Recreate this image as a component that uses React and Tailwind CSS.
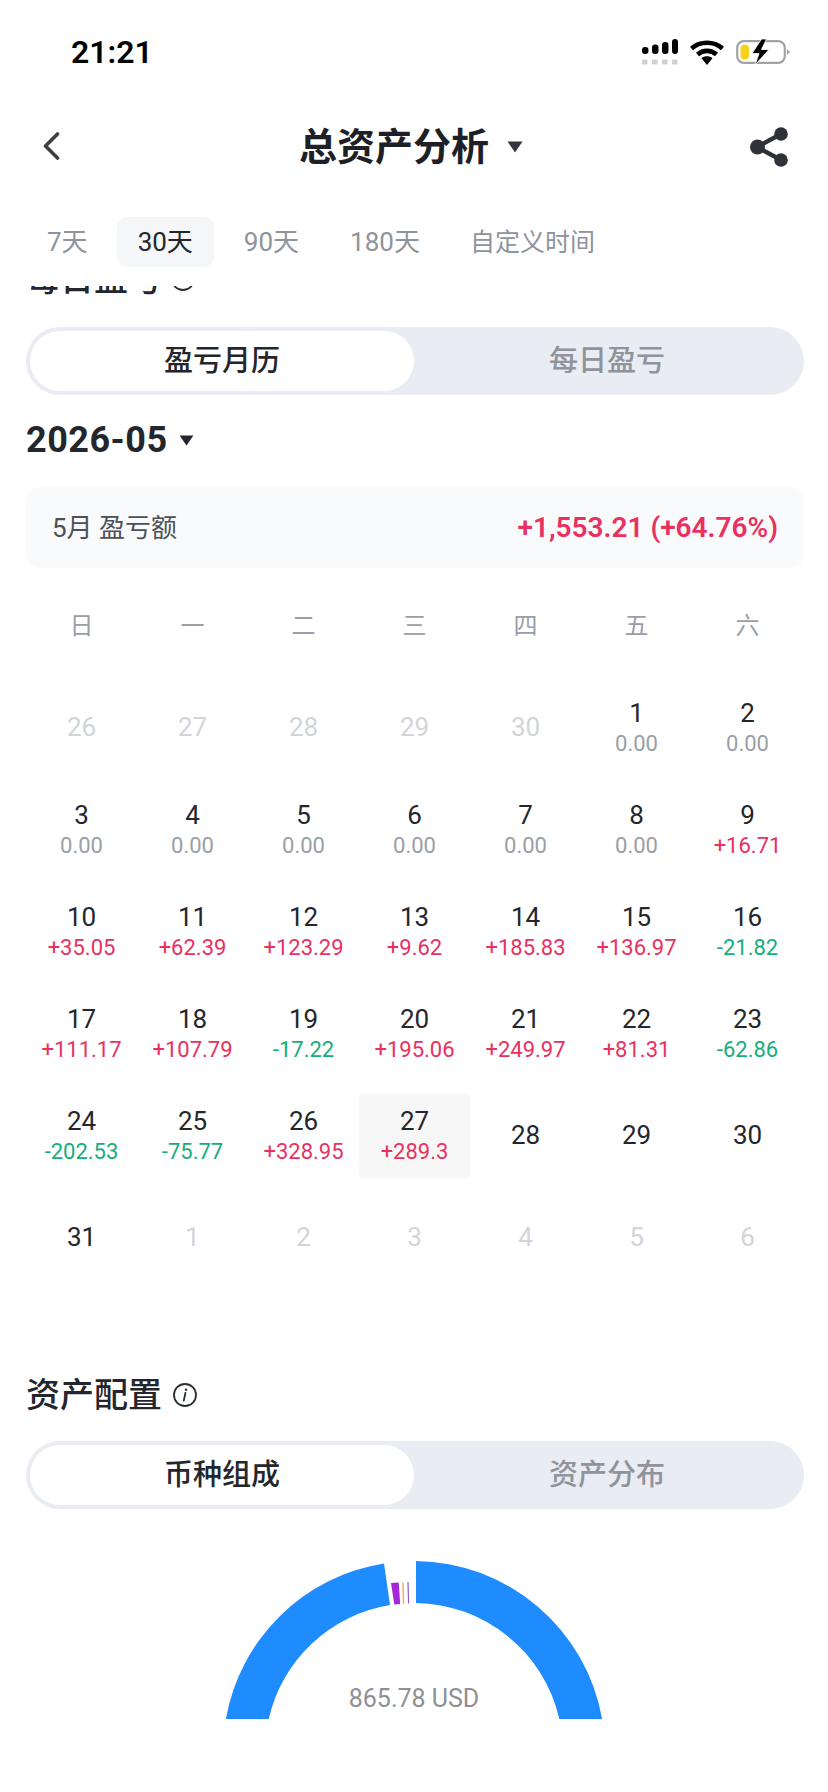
import React from 'react';

const weekDays = ['日', '一', '二', '三', '四', '五', '六'];

const days = [
  { d: '26', muted: true }, { d: '27', muted: true }, { d: '28', muted: true }, { d: '29', muted: true }, { d: '30', muted: true }, { d: '1', v: '0.00' }, { d: '2', v: '0.00' },
  { d: '3', v: '0.00' }, { d: '4', v: '0.00' }, { d: '5', v: '0.00' }, { d: '6', v: '0.00' }, { d: '7', v: '0.00' }, { d: '8', v: '0.00' }, { d: '9', v: '+16.71' },
  { d: '10', v: '+35.05' }, { d: '11', v: '+62.39' }, { d: '12', v: '+123.29' }, { d: '13', v: '+9.62' }, { d: '14', v: '+185.83' }, { d: '15', v: '+136.97' }, { d: '16', v: '-21.82' },
  { d: '17', v: '+111.17' }, { d: '18', v: '+107.79' }, { d: '19', v: '-17.22' }, { d: '20', v: '+195.06' }, { d: '21', v: '+249.97' }, { d: '22', v: '+81.31' }, { d: '23', v: '-62.86' },
  { d: '24', v: '-202.53' }, { d: '25', v: '-75.77' }, { d: '26', v: '+328.95' }, { d: '27', v: '+289.3', today: true }, { d: '28' }, { d: '29' }, { d: '30' },
  { d: '31' }, { d: '1', muted: true }, { d: '2', muted: true }, { d: '3', muted: true }, { d: '4', muted: true }, { d: '5', muted: true }, { d: '6', muted: true },
];

const valueColor = (v) => {
  if (v.startsWith('+')) return 'text-[#e8315f]';
  if (v.startsWith('-')) return 'text-[#16ad7c]';
  return 'text-[#9a9ea6]';
};

const Triangle = ({ className }) => (
  <svg viewBox="0 0 16 12" className={className}>
    <path d="M0.5 0.5H15.5L8 11.5Z" fill="currentColor" />
  </svg>
);

const InfoIcon = () => (
  <svg viewBox="0 0 26 26" className="w-[26px] h-[26px] text-[#2a2e35]">
    <circle cx="13" cy="13" r="11" fill="none" stroke="currentColor" strokeWidth="1.8" />
    <circle cx="14" cy="7.8" r="1.2" fill="currentColor" />
    <path d="M13.4 11 L11.8 18.6" fill="none" stroke="currentColor" strokeWidth="1.8" strokeLinecap="round" />
  </svg>
);

const Segment = ({ active, other }) => (
  <div className="ml-[26px] mr-[24px] h-[68px] rounded-full bg-[#e9ecf2] p-[4px] flex items-stretch text-[29px] leading-none">
    <div className="w-[384px] rounded-full bg-white flex items-center justify-center text-[#23262c] font-medium">{active}</div>
    <div className="flex-1 flex items-center justify-center text-[#8f939b] font-medium">{other}</div>
  </div>
);

const StatusIcons = () => (
  <div className="flex items-center">
    {/* signal */}
    <svg viewBox="0 0 36 26" className="w-[36px] h-[26px]">
      <rect x="0" y="8" width="6.5" height="7" rx="3" fill="#000" />
      <rect x="10" y="5.5" width="6.5" height="9.5" rx="3" fill="#000" />
      <rect x="20" y="3" width="6.5" height="12" rx="3" fill="#000" />
      <rect x="30" y="0" width="6" height="15" rx="3" fill="#000" />
      {[0, 10, 20, 30].map((x) => (
        <rect key={x} x={x} y="20.5" width="5.5" height="5" rx="1" fill="#cfcfcf" />
      ))}
    </svg>
    {/* wifi */}
    <svg viewBox="0 0 34 25" className="w-[34px] h-[25px] ml-[12px]">
      <path d="M1.5 8.5C10 0.8 24 0.8 32.5 8.5" fill="none" stroke="#000" strokeWidth="4.6" />
      <path d="M7.5 14.5C13 9.6 21 9.6 26.5 14.5" fill="none" stroke="#000" strokeWidth="4.6" />
      <path d="M11.5 18.2C14.6 15.6 19.4 15.6 22.5 18.2L17 25Z" fill="#000" />
    </svg>
    {/* battery */}
    <svg viewBox="0 0 54 26" className="w-[54px] h-[26px] ml-[12px]">
      <rect x="1.2" y="2.2" width="47.6" height="21.6" rx="6.5" fill="none" stroke="#a3a3a3" strokeWidth="2.2" />
      <path d="M51 10L54 13L51 16Z" fill="#a3a3a3" />
      <rect x="4.5" y="5.5" width="8.5" height="15" rx="4" fill="#f6d21e" />
      <path d="M25.5 0L16 14.5H23L19 26L33 10.5H25.5L30.5 0Z" fill="#000" stroke="#fff" strokeWidth="0.8" />
    </svg>
  </div>
);

export default function App() {
  return (
    <div className="w-[828px] h-[1792px] overflow-hidden bg-white flex flex-col text-[#23262c] font-[Roboto,'Noto_Sans_CJK_SC',sans-serif]">
      {/* Status bar */}
      <div className="h-[104px] shrink-0 pl-[71px] pr-[38px] flex items-center justify-between">
        <span className="text-[32px] leading-none font-semibold text-black">21:21</span>
        <StatusIcons />
      </div>

      {/* Nav */}
      <div className="h-[84px] shrink-0 pl-[42px] pr-[40px] flex items-center">
        <svg viewBox="0 0 18 28" className="w-[18px] h-[28px] text-[#3c3f45]">
          <path d="M15.5 2L3.5 14L15.5 26" fill="none" stroke="currentColor" strokeWidth="3.6" strokeLinecap="round" strokeLinejoin="round" />
        </svg>
        <div className="ml-[239px] mt-[1px] flex items-center">
          <span className="text-[38px] leading-none font-semibold text-[#1d2026]">总资产分析</span>
          <Triangle className="w-[16px] h-[12px] ml-[18px] text-[#33363c]" />
        </div>
        <svg viewBox="0 0 38 40" className="w-[38px] h-[40px] ml-auto mt-[2px] text-[#2f3237]">
          <path d="M31 7L7 20L31 33" fill="none" stroke="currentColor" strokeWidth="4.4" />
          <circle cx="31" cy="7" r="6.8" fill="currentColor" />
          <circle cx="7.5" cy="20" r="7.5" fill="currentColor" />
          <circle cx="31" cy="33" r="6.8" fill="currentColor" />
        </svg>
      </div>

      {/* Range tabs */}
      <div className="mt-[29px] h-[50px] shrink-0 pl-[26px] flex gap-[9px] text-[26px] leading-none text-[#8f939b]">
        <div className="pl-[21px] pr-[20px] flex items-center">7天</div>
        <div className="px-[21px] flex items-center rounded-[10px] bg-[#f5f6f8] text-[#23262c]">30天</div>
        <div className="px-[21px] flex items-center">90天</div>
        <div className="px-[21px] flex items-center">180天</div>
        <div className="pl-[20px] pr-[21px] flex items-center text-[25px]">自定义时间</div>
      </div>

      {/* Clipped section heading, scrolled under the tabs */}
      <div className="mt-[19px] h-[11px] shrink-0 overflow-hidden pl-[26px] flex items-end">
        <div className="flex items-center gap-[8px] text-[34px] leading-[40px] font-medium shrink-0 -mb-[2px]">
          <span>每日盈亏</span>
          <InfoIcon />
        </div>
      </div>

      <div className="mt-[30px] shrink-0">
        <Segment active="盈亏月历" other="每日盈亏" />
      </div>

      {/* Month picker */}
      <div className="mt-[23px] h-[44px] shrink-0 pl-[26px] flex items-center">
        <span className="text-[36px] leading-none font-bold tracking-[0.5px]">2026-05</span>
        <Triangle className="w-[15px] h-[11px] ml-[11px] text-[#23262c]" />
      </div>

      {/* Month summary */}
      <div className="mt-[25px] ml-[26px] mr-[24px] h-[81px] shrink-0 rounded-[14px] bg-[#f9fafc] px-[26px] flex items-center justify-between">
        <span className="text-[26px] leading-none text-[#4c5058]">5月 盈亏额</span>
        <span className="text-[28px] leading-none font-semibold text-[#e8315f]">+1,553.21 (+64.76%)</span>
      </div>

      {/* Calendar */}
      <div className="mt-[38px] ml-[26px] mr-[25px] h-[40px] shrink-0 grid grid-cols-7 text-[24px] leading-none text-[#9a9ea6]">
        {weekDays.map((w) => (
          <div key={w} className="flex items-center justify-center">{w}</div>
        ))}
      </div>
      <div className="mt-[40px] ml-[26px] mr-[25px] shrink-0 grid grid-cols-7 gap-y-[18px]">
        {days.map((c, i) => (
          <div
            key={i}
            className={`h-[84px] pb-[2px] flex flex-col items-center justify-center ${c.today ? 'bg-[#f7f7f7] rounded-[4px]' : ''}`}
          >
            <span className={`text-[26px] leading-[30px] ${c.muted ? 'text-[#d2d4d8]' : 'text-[#23262c]'}`}>{c.d}</span>
            {c.v && <span className={`mt-[4px] text-[22px] leading-[24px] ${valueColor(c.v)}`}>{c.v}</span>}
          </div>
        ))}
      </div>

      {/* Asset allocation */}
      <div className="mt-[93px] h-[44px] shrink-0 pl-[26px] flex items-center gap-[10px]">
        <span className="text-[34px] leading-none font-medium">资产配置</span>
        <InfoIcon />
      </div>
      <div className="mt-[24px] shrink-0">
        <Segment active="币种组成" other="资产分布" />
      </div>

      <div className="relative mt-[46px] w-[380px] h-[164px] mx-auto shrink-0">
        <svg viewBox="224 1555 380 164" className="w-[380px] h-[164px]">
          <path d="M416 1561A191 191 0 0 1 602.1 1719L559.3 1719A149 149 0 0 0 416 1603Z" fill="#1e8cff" />
          <path d="M225.9 1719A191 191 0 0 1 384 1563.4L390 1605A149 149 0 0 0 268.7 1719Z" fill="#1e8cff" />
          <path d="M391 1583L398.7 1582.4L400.2 1604L394.3 1604.6Z" fill="#a626d9" />
          <path d="M403 1582.5L403.6 1604" stroke="#f0b04a" strokeWidth="1.4" fill="none" />
          <path d="M408 1582L408.6 1603.5" stroke="#8a5cd6" strokeWidth="1.2" fill="none" />
        </svg>
        <div className="absolute bottom-[6px] left-0 right-0 text-center text-[25px] leading-[28px] text-[#8e9095]">865.78 USD</div>
      </div>
    </div>
  );
}
